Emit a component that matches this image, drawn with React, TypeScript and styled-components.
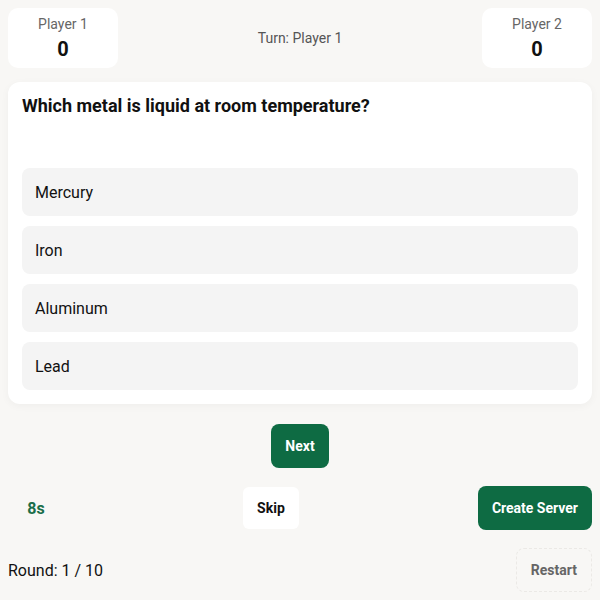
import React from 'react'
import styled, { createGlobalStyle } from 'styled-components'

const GlobalStyle = createGlobalStyle`
  * { box-sizing: border-box; }
  body {
    margin: 0;
    background: #f8f7f5;
    font-family: Roboto, "Liberation Sans", Arial, sans-serif;
    color: #111;
  }
`

const Page = styled.div`
  padding: 8px;
  display: flex;
  flex-direction: column;
`

const Header = styled.div`
  display: flex;
  justify-content: space-between;
  align-items: center;
  margin-bottom: 14px;
`

const PlayerCard = styled.div`
  width: 110px;
  height: 60px;
  background: #fff;
  border-radius: 10px;
  display: flex;
  flex-direction: column;
  align-items: center;
  justify-content: center;
  gap: 6px;
`

const PlayerName = styled.div`
  font-size: 14px;
  line-height: 16px;
  color: #666;
`

const Score = styled.div`
  font-size: 20px;
  line-height: 22px;
  font-weight: 700;
  color: #111;
`

const Turn = styled.div`
  font-size: 14px;
  color: #555;
`

const QuestionCard = styled.div`
  background: #fff;
  border-radius: 12px;
  padding: 14px;
  box-shadow: 0 2px 8px rgba(0, 0, 0, 0.04);
  display: flex;
  flex-direction: column;
  gap: 10px;
`

const Question = styled.h2`
  margin: 0;
  font-size: 18px;
  font-weight: 700;
  line-height: 20px;
  min-height: 62px;
`

const Option = styled.button`
  height: 48px;
  border: none;
  border-radius: 8px;
  background: #f4f4f4;
  padding: 0 13px;
  text-align: left;
  font-family: inherit;
  font-size: 16px;
  color: #111;
`

const NextRow = styled.div`
  display: flex;
  justify-content: center;
  margin-top: 20px;
`

const Button = styled.button<{ $variant?: 'primary' | 'plain' | 'ghost' }>`
  height: ${p => (p.$variant === 'plain' ? '42px' : '44px')};
  padding: 0 14px;
  border-radius: ${p => (p.$variant === 'plain' ? '6px' : '8px')};
  font-family: inherit;
  font-size: 14px;
  font-weight: 700;
  border: ${p => (p.$variant === 'ghost' ? '1px dashed #ebe9e6' : 'none')};
  background: ${p =>
    p.$variant === 'primary' ? '#0e6b43' : p.$variant === 'ghost' ? 'transparent' : '#fff'};
  color: ${p => (p.$variant === 'primary' ? '#fff' : p.$variant === 'ghost' ? '#666' : '#111')};
`

const ControlRow = styled.div`
  display: flex;
  justify-content: space-between;
  align-items: center;
  margin-top: 18px;
`

const Timer = styled.div`
  width: 56px;
  text-align: center;
  font-size: 16px;
  font-weight: 700;
  color: #1b6e49;
`

const FooterRow = styled.div`
  display: flex;
  justify-content: space-between;
  align-items: center;
  margin-top: 18px;
`

const Round = styled.div`
  font-size: 16px;
  color: #111;
`

const options = ['Mercury', 'Iron', 'Aluminum', 'Lead']

export default function App() {
  return (
    <>
      <GlobalStyle />
      <Page>
        <Header>
          <PlayerCard>
            <PlayerName>Player 1</PlayerName>
            <Score>0</Score>
          </PlayerCard>
          <Turn>Turn: Player 1</Turn>
          <PlayerCard>
            <PlayerName>Player 2</PlayerName>
            <Score>0</Score>
          </PlayerCard>
        </Header>
        <QuestionCard>
          <Question>Which metal is liquid at room temperature?</Question>
          {options.map(o => (
            <Option key={o}>{o}</Option>
          ))}
        </QuestionCard>
        <NextRow>
          <Button $variant="primary">Next</Button>
        </NextRow>
        <ControlRow>
          <Timer>8s</Timer>
          <Button $variant="plain">Skip</Button>
          <Button $variant="primary">Create Server</Button>
        </ControlRow>
        <FooterRow>
          <Round>Round: 1 / 10</Round>
          <Button $variant="ghost">Restart</Button>
        </FooterRow>
      </Page>
    </>
  )
}
